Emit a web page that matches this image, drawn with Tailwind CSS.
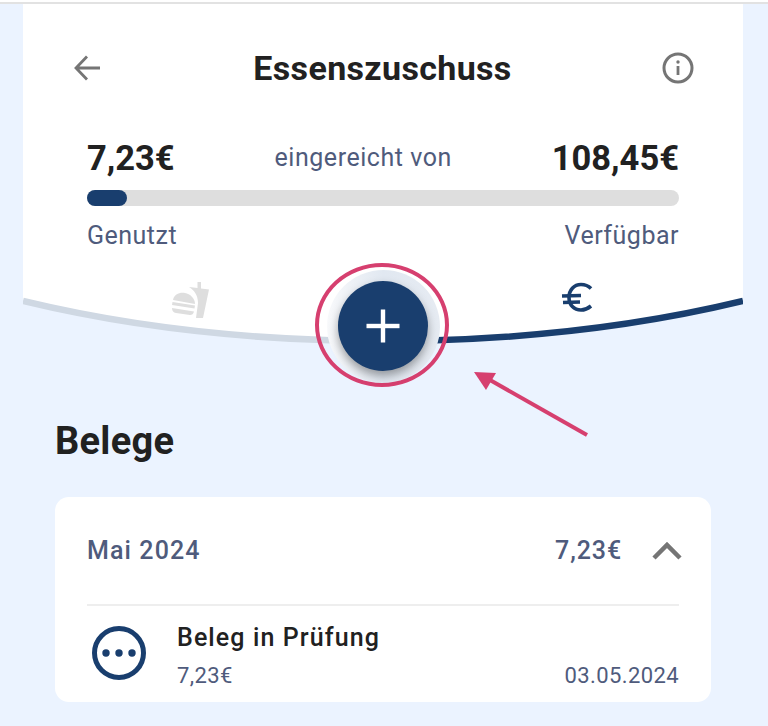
<!doctype html>
<html><head><meta charset="utf-8"><script src="https://cdn.jsdelivr.net/npm/@tailwindcss/browser@4"></script></head>
<body class="m-0">
<div class="relative w-[768px] h-[726px] overflow-hidden bg-[#ebf3ff] font-['Roboto',sans-serif]">
  <div class="h-[4px] bg-white border-b-2 border-[#e2e2e2]"></div>
  <div class="relative mx-[23px] h-[340px] w-[720px]">
    <svg class="absolute left-0 top-0" width="720" height="340" viewBox="0 0 720 340" fill="none">
      <defs><clipPath id="l"><path d="M0 0H307V340H0Z"/></clipPath><clipPath id="r"><path d="M413 0H720V340H413Z"/></clipPath></defs>
      <path d="M0 0H720V297C600 326 480 337 360 337C240 337 120 326 0 297Z" fill="#fff"/>
      <path d="M0 297C120 326 240 337 360 337" stroke="#cfd8e3" stroke-width="6.500" clip-path="url(#l)"/>
      <path d="M720 297C600 326 480 337 360 337" stroke="#193e6e" stroke-width="6.500" clip-path="url(#r)"/>
    </svg>
    <div class="relative">
      <div class="flex h-[64px] items-center justify-between pl-[50px] pr-[48px] pt-[32px] box-content">
        <svg width="30" height="30" viewBox="0 0 30 30" fill="none" stroke="#757575" stroke-width="2.8"><path d="M27 15H4M14 3.500L3 15L14 26.500"/></svg>
        <h1 class="ml-[1px] text-[34px] leading-[40px] font-bold tracking-[0.35px] text-[#212121]">Essenszuschuss</h1>
        <svg width="34" height="34" viewBox="0 0 34 34" fill="none"><circle cx="17" cy="17" r="14" stroke="#757575" stroke-width="3"/><rect x="15.600" y="15" width="2.800" height="9" fill="#757575"/><circle cx="17" cy="11" r="1.700" fill="#757575"/></svg>
      </div>
    </div>
    <div class="relative mx-[64px] mt-[40px]">
      <div class="flex items-center justify-between h-[36px] pt-[2px]">
        <span class="text-[34.500px] font-bold text-[#212121]">7,23€</span>
        <span class="mb-[2px] text-[25px] tracking-[0.55px] text-[#4f5b7c]">eingereicht von</span>
        <span class="text-[34.500px] font-bold text-[#212121]">108,45€</span>
      </div>
      <div class="mt-[14px] h-4 rounded-full bg-[#dedede]"><div class="h-4 w-[40px] rounded-full bg-[#193e6e]"></div></div>
      <div class="mt-[12px] flex justify-between text-[25px] leading-[36px] tracking-[0.5px] text-[#4f5b7c]"><span>Genutzt</span><span>Verfügbar</span></div>
    </div>
  </div>
  <!-- tab icons -->
  <svg class="absolute left-[170px] top-[281px]" width="40" height="38" viewBox="0 0 40 38" fill="#dedede">
    <path d="M3 19C4 13 10 11 15 12C20 13 25 17 25 23L3 19Z"/><path d="M2.500 21L25 24.500L24.500 27.500L2 24Z"/><path d="M2 27L24 30.500C23.500 33 22 34 20 34L6 32C3.500 31.500 2 30 2 27Z"/>
    <path d="M19 6L27.500 7V1H31V7.500L39 8.500L33 37L26 37L28 22C28 14 24 9 19 6Z"/>
  </svg>
  <svg class="absolute left-[561px] top-[282px]" width="32" height="32" viewBox="0 0 32 32" fill="none" stroke="#193e6e" stroke-width="3.600"><path d="M30 6.500C27 3.500 23 2.500 20 2.500C13 2.500 8 8 8 15.500C8 23 13 28 20 28C24 28 27 26.500 30 24"/><path d="M1 14L20 13.500M2 20.500L19 20"/></svg>
  <!-- FAB -->
  <div class="absolute left-[327px] top-[270px] size-[113px] rounded-full bg-linear-to-r from-[#f8f9fb] via-[#e1e8f1] to-[#e6ebf2]"></div>
  <div class="absolute left-[315px] top-[263px] h-[124px] w-[134px] rounded-[50%] border-[4px] border-[#d63f6f]"></div>
  <div class="absolute left-[338px] top-[281px] flex size-[90px] items-center justify-center rounded-full bg-[#193e6e] shadow-[0_5px_10px_rgba(0,0,0,0.35)]">
    <svg width="34" height="34" viewBox="0 0 34 34" fill="#fff"><rect x="14.800" y="0.500" width="4.400" height="33"/><rect x="0.500" y="14.800" width="33" height="4.400"/></svg>
  </div>
  <!-- annotation arrow -->
  <svg class="absolute left-[470px] top-[365px]" width="122" height="76" viewBox="0 0 122 76" fill="none">
    <path d="M117 70L20 15" stroke="#d63f6f" stroke-width="4"/><path d="M4 7L26 8L16 25Z" fill="#d63f6f"/>
  </svg>
  <div class="absolute left-[55px] right-[57px] top-[418px]">
    <h2 class="text-[38px] leading-[46px] font-bold tracking-[0.3px] text-[#212121]">Belege</h2>
    <div class="mt-[33px] h-[205px] overflow-hidden rounded-[14px] bg-white px-[32px]">
      <div class="flex h-[109px] items-center justify-between border-b-2 border-[#eeeeee] text-[#4f5b7c]">
        <span class="text-[25px] font-medium tracking-[1.100px]">Mai 2024</span>
        <div class="flex items-center gap-[30px]"><span class="text-[25px] font-medium tracking-[0.900px]">7,23€</span>
          <svg width="30" height="20" viewBox="0 0 30 20" fill="none" stroke="#757575" stroke-width="4.500" class="mr-[-3px]"><path d="M2 17L15 4L28 17"/></svg></div>
      </div>
      <div class="flex pt-[16px]">
        <svg class="mt-[4px] ml-[5px] shrink-0" width="54" height="54" viewBox="0 0 54 54" fill="none"><circle cx="27" cy="27" r="24.500" stroke="#193e6e" stroke-width="5"/><circle cx="14" cy="27" r="3.700" fill="#193e6e"/><circle cx="27" cy="27" r="3.700" fill="#193e6e"/><circle cx="40" cy="27" r="3.700" fill="#193e6e"/></svg>
        <div class="ml-[31px] flex-1">
          <div class="text-[25px] leading-[32px] font-medium tracking-[1.100px] text-[#212121]">Beleg in Prüfung</div>
          <div class="mt-[7px] flex justify-between text-[22px] leading-[30px] tracking-[0.400px] text-[#4f5b7c]"><span>7,23€</span><span>03.05.2024</span></div>
        </div>
      </div>
    </div>
  </div>
</div>
</body></html>
